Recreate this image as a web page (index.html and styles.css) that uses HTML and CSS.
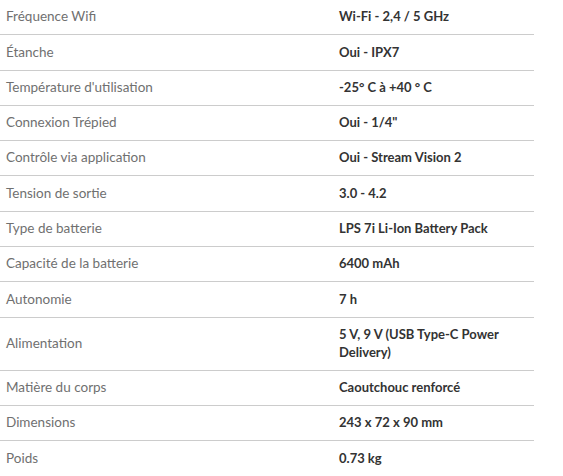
FILE: index.html
```html
<!DOCTYPE html>
<html lang="fr">
<head>
<meta charset="utf-8">
<title>Caractéristiques</title>
<link rel="stylesheet" href="styles.css">
</head>
<body>
<table class="specs">
  <tbody>
    <tr><th>Fréquence Wifi</th><td>Wi-Fi - 2,4 / 5 GHz</td></tr>
    <tr><th>Étanche</th><td>Oui - IPX7</td></tr>
    <tr><th>Température d'utilisation</th><td>-25° C à +40 ° C</td></tr>
    <tr><th>Connexion Trépied</th><td>Oui - 1/4"</td></tr>
    <tr><th>Contrôle via application</th><td>Oui - Stream Vision 2</td></tr>
    <tr><th>Tension de sortie</th><td>3.0 - 4.2</td></tr>
    <tr><th>Type de batterie</th><td>LPS 7i Li-Ion Battery Pack</td></tr>
    <tr><th>Capacité de la batterie</th><td>6400 mAh</td></tr>
    <tr><th>Autonomie</th><td>7 h</td></tr>
    <tr><th>Alimentation</th><td>5 V, 9 V (USB Type-C Power Delivery)</td></tr>
    <tr><th>Matière du corps</th><td>Caoutchouc renforcé</td></tr>
    <tr><th>Dimensions</th><td>243 x 72 x 90 mm</td></tr>
    <tr><th>Poids</th><td>0.73 kg</td></tr>
  </tbody>
</table>
</body>
</html>
```
FILE: styles.css
```css
html, body {
  margin: 0;
  padding: 0;
  background: #ffffff;
}

.specs {
  width: 534px;
  border-collapse: collapse;
  table-layout: fixed;
  font-family: "Lato", "Open Sans", sans-serif;
  line-height: 17.8px;
}

.specs th,
.specs td {
  padding: 8.25px 6px;
  border-bottom: 1px solid #cccccc;
  text-align: left;
  vertical-align: middle;
}

.specs th {
  width: 321px;
  font-size: 13.5px;
  font-weight: 400;
  color: #707070;
}

.specs td {
  font-size: 13px;
  font-weight: 700;
  color: #333333;
}
```
